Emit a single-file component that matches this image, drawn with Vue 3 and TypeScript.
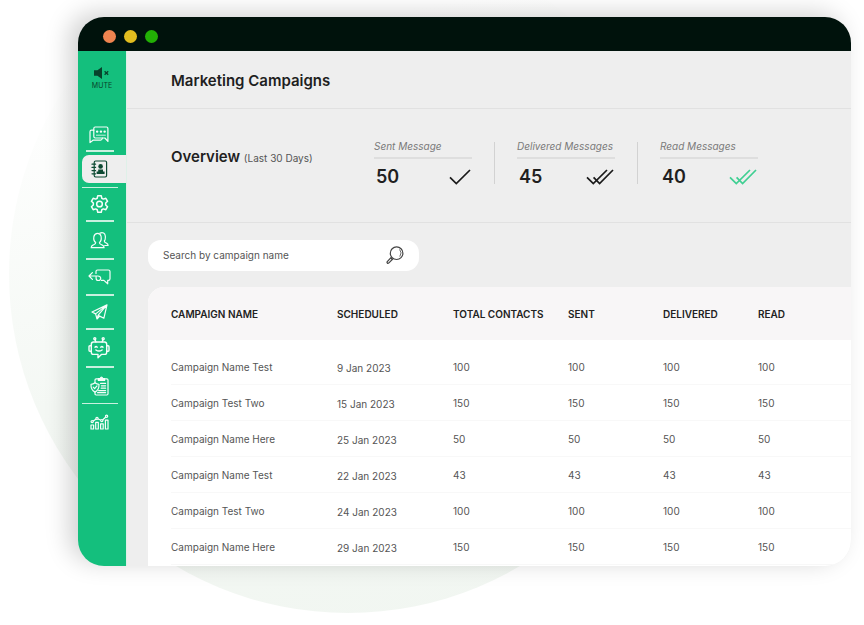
<script setup lang="ts">
import { ref } from 'vue'

interface NavItem {
  id: string
  label: string
  size?: 'compact' | 'short' | 'tall'
  wide?: boolean
}

interface Campaign {
  name: string
  scheduled: string
  count: number
}

interface Stat {
  label: string
  value: number
  icon: 'single' | 'double'
  read?: boolean
}

const navItems: NavItem[] = [
  { id: 'chat', label: 'Chats', size: 'compact' },
  { id: 'contacts', label: 'Contacts', wide: true },
  { id: 'settings', label: 'Settings', size: 'short' },
  { id: 'team', label: 'Team', size: 'tall' },
  { id: 'replies', label: 'Replies' },
  { id: 'campaigns', label: 'Campaigns', size: 'short' },
  { id: 'bot', label: 'Chatbot', size: 'tall' },
  { id: 'policies', label: 'Policies', wide: true },
  { id: 'analytics', label: 'Analytics' },
]

const stats: Stat[] = [
  { label: 'Sent Message', value: 50, icon: 'single' },
  { label: 'Delivered Messages', value: 45, icon: 'double' },
  { label: 'Read Messages', value: 40, icon: 'double', read: true },
]

const campaigns: Campaign[] = [
  { name: 'Campaign Name Test', scheduled: '9 Jan 2023', count: 100 },
  { name: 'Campaign Test Two', scheduled: '15 Jan 2023', count: 150 },
  { name: 'Campaign Name Here', scheduled: '25 Jan 2023', count: 50 },
  { name: 'Campaign Name Test', scheduled: '22 Jan 2023', count: 43 },
  { name: 'Campaign Test Two', scheduled: '24 Jan 2023', count: 100 },
  { name: 'Campaign Name Here', scheduled: '29 Jan 2023', count: 150 },
]

const active = ref('contacts')
const query = ref('')
</script>

<template>
  <div class="page">
    <div class="backdrop" aria-hidden="true"></div>
    <div class="window">
      <div class="titlebar">
        <span class="dot orange"></span>
        <span class="dot yellow"></span>
        <span class="dot green"></span>
      </div>
      <div class="body">
        <nav class="sidebar">
          <button class="mute" type="button">
            <svg width="16" height="12" viewBox="0 0 16 12" aria-hidden="true">
              <path d="M0 3.2h3.4L8 0v12L3.4 8.8H0z" fill="currentColor" />
              <path d="M10.6 4.2l3.6 3.6M14.2 4.2l-3.6 3.6" stroke="currentColor" stroke-width="1.3" />
            </svg>
            <span>MUTE</span>
          </button>
          <ul class="nav">
            <li v-for="item in navItems" :key="item.id" :class="[item.size, { wide: item.wide }]">
              <button
                type="button"
                :aria-label="item.label"
                :class="{ active: active === item.id }"
                @click="active = item.id"
              >
                <svg v-if="item.id === 'chat'" width="20" height="18" viewBox="0 0 20 18">
                  <path d="M6.2 1h11.3q1.4 0 1.4 1.4v13L15.9 12H6.2q-1.4 0-1.4-1.4V2.4Q4.8 1 6.2 1z" />
                  <path d="M4.8 4.2H2.6Q1 4.2 1 5.8V16.6l3-2.4h7.6q1.4 0 1.8-2" />
                  <path d="M8.1 5.6h.1M11.9 5.6h.1M15.6 5.6h.1" stroke-width="2.4" />
                  <path d="M7.4 9.2h9" stroke-width="0.8" />
                </svg>
                <svg v-else-if="item.id === 'contacts'" width="17" height="18" viewBox="0 0 17 18">
                  <rect x="3.2" y="1" width="12.4" height="16" rx="1.4" />
                  <path d="M1 4.2h3.6M1 7.4h3.6M1 10.6h3.6M1 13.8h3.6" />
                  <circle cx="9.6" cy="6.4" r="2.3" fill="currentColor" stroke="none" />
                  <path d="M7.2 9.4h4.8v2.2h1.6v2.3H5.6v-2.3h1.6z" fill="currentColor" stroke="none" />
                </svg>
                <svg v-else-if="item.id === 'settings'" width="19" height="20" viewBox="0 0 24 24" class="heavy">
                  <circle cx="12" cy="12" r="3.6" />
                  <path d="M9.8 1.5h4.4l.7 3.2 2 1.1 3.1-1 2.2 3.8-2.4 2.2v2.4l2.4 2.2-2.2 3.8-3.1-1-2 1.1-.7 3.2H9.8l-.7-3.2-2-1.1-3.1 1-2.2-3.8 2.4-2.2v-2.4L1.8 8.6 4 4.8l3.1 1 2-1.1z" />
                </svg>
                <svg v-else-if="item.id === 'team'" width="19" height="17" viewBox="0 0 19 17">
                  <path d="M5.7 10.6C3.8 9.2 3.6 6.2 3.9 4.5 4.4 2.4 5.8 1.4 7.6 1.4s3.1 1 3.5 3.1c.3 1.8.1 4.6-1.7 6.1-.2 1.5 1 1.7 3 2.5 1.4.6 1.7 1.4 1.7 2.6H1.2c0-1.3.3-2 1.7-2.6 1.8-.8 3-1 2.8-2.5z" />
                  <path d="M10 1.1C12.8-.1 15 1.2 15.3 4c.2 2 .2 3.7-1 5 0 1.3.8 1.5 2.2 2.1 1.2.5 1.6 1.1 1.6 2.4h-3.4" />
                </svg>
                <svg v-else-if="item.id === 'replies'" width="23" height="16" viewBox="0 0 23 16">
                  <path d="M8 4.5V2.6Q8 1 9.6 1H20.4Q22 1 22 2.6v7.2q0 1.6-1.6 1.6h-.7v3.4l-3.8-3.4h-2.5" />
                  <path d="M4.4 3.6L1 7l3.4 3.4M1 7h8.7c2.1 0 3 1 3 2.3s-1.1 2.2-2.3 2.2-2.3-1-2.3-2.3V7" />
                </svg>
                <svg v-else-if="item.id === 'campaigns'" width="17" height="16" viewBox="0 0 17 16">
                  <path d="M16 .9L1 8l3.6 1.9L6 15l2.7-2.9 4.2 2.1zM4.6 9.9L16 .9 7.2 11.2 6 15M7.2 11.2l1.5.9" />
                </svg>
                <svg v-else-if="item.id === 'bot'" width="22" height="22" viewBox="0 0 22 22" class="heavy-sm">
                  <path d="M5.5 5h11q2.2 0 2.2 2.2v8q0 2.2-2.2 2.2h-3.1L10 20.7v-3.3H5.5q-2.2 0-2.2-2.2v-8Q3.3 5 5.5 5z" />
                  <path d="M3.3 8.7H1.9Q1 8.7 1 9.7v3.5q0 1 .9 1h1.4M18.7 8.7h1.4q.9 0 .9 1v3.5q0 1-.9 1h-1.4" />
                  <path d="M7.9 5L7 2.6M14.1 5l.9-2.4M7 10.2q1.1-1.4 2.2 0M12.8 10.2q1.1-1.4 2.2 0M7.9 13q3.1 2.1 6.2 0" />
                  <circle cx="6.8" cy="1.8" r="1" />
                  <circle cx="15.2" cy="1.8" r="1" />
                </svg>
                <svg v-else-if="item.id === 'policies'" width="19" height="20" viewBox="0 0 19 20">
                  <path d="M5 7V4q0-1.2 1.2-1.2h10.6Q18 2.8 18 4v13.8q0 1.2-1.2 1.2H6.2Q5 19 5 17.8v-2" />
                  <path d="M8.4 4.4V2.6h1.8q1.3-3.2 2.6 0h1.8v1.8z" fill="currentColor" />
                  <path d="M10.6 7.4h5M11.4 9.8h4.2M11.2 12.2h4.4M8.6 14.6h7M7.6 16.7h8" />
                  <path d="M5 6.8q1.8 1.5 4 1.5c.2 3.6-1 6.3-4 7.8-3-1.5-4.2-4.2-4-7.8q2.2 0 4-1.5zM3.2 11.2l1.4 1.5 2.4-2.8" />
                </svg>
                <svg v-else width="19" height="16" viewBox="0 0 19 16">
                  <path d="M1 11h2.6v4H1zM5.7 8.4h2.6V15H5.7zM10.6 9.8h2.6V15h-2.6zM15.4 6.2H18V15h-2.6z" />
                  <path d="M3.2 7l2.7-1.8M8.1 5l2.4 1M12.8 5.8l2.7-2.6" />
                  <circle cx="2.2" cy="7.6" r="1.1" />
                  <circle cx="7" cy="4.4" r="1.1" />
                  <circle cx="11.8" cy="6.6" r="1.1" />
                  <circle cx="16.6" cy="2.2" r="1.1" />
                </svg>
              </button>
            </li>
          </ul>
        </nav>

        <main class="content">
          <header class="heading">
            <h1>Marketing Campaigns</h1>
          </header>

          <section class="overview">
            <h2>Overview <small>(Last 30 Days)</small></h2>
            <div class="stats">
              <div v-for="stat in stats" :key="stat.label" class="stat">
                <div class="stat-label">{{ stat.label }}</div>
                <div class="stat-row">
                  <strong>{{ stat.value }}</strong>
                  <svg v-if="stat.icon === 'single'" width="22" height="16" viewBox="0 0 22 16">
                    <path d="M1 8.3L7.3 14.6 21 1" />
                  </svg>
                  <svg v-else width="28" height="16" viewBox="0 0 28 16" :class="{ read: stat.read }">
                    <path d="M1 8.3L7.3 14.6 21 1M7.6 8.3L13.6 14.6 27 1" />
                  </svg>
                </div>
              </div>
            </div>
          </section>

          <form class="search" role="search" @submit.prevent>
            <input v-model="query" type="text" placeholder="Search by campaign name" aria-label="Search by campaign name" />
            <button type="submit" aria-label="Search">
              <svg width="18" height="18" viewBox="0 0 18 18">
                <circle cx="10.6" cy="7.2" r="6.3" />
                <path d="M13.6 3.4q2.8 3.2.2 7.2" stroke-width="0.8" />
                <path d="M6.2 11.8L5 13M5 11.6l1.6 1.6-3.9 3.9q-.8.5-1.4-.1t0-1.4z" />
              </svg>
            </button>
          </form>

          <div class="card">
            <table>
              <colgroup>
                <col class="c-name" />
                <col class="c-date" />
                <col class="c-total" />
                <col class="c-num" />
                <col class="c-num" />
                <col />
              </colgroup>
              <thead>
                <tr>
                  <th scope="col">CAMPAIGN NAME</th>
                  <th scope="col">SCHEDULED</th>
                  <th scope="col">TOTAL CONTACTS</th>
                  <th scope="col">SENT</th>
                  <th scope="col">DELIVERED</th>
                  <th scope="col">READ</th>
                </tr>
              </thead>
              <tbody>
                <tr v-for="(row, i) in campaigns" :key="i">
                  <td>{{ row.name }}</td>
                  <td class="date">{{ row.scheduled }}</td>
                  <td>{{ row.count }}</td>
                  <td>{{ row.count }}</td>
                  <td>{{ row.count }}</td>
                  <td>{{ row.count }}</td>
                </tr>
              </tbody>
            </table>
          </div>
        </main>
      </div>
    </div>
  </div>
</template>

<style>
body {
  background: #fff;
}
</style>

<style scoped>
.page {
  position: relative;
  box-sizing: border-box;
  min-height: 100vh;
  padding: 17px 13px 59px 78px;
  overflow: hidden;
  font-family: Inter, "Liberation Sans", sans-serif;
  color: #1f1f1f;
}

.backdrop {
  position: absolute;
  left: 9px;
  top: -65px;
  width: 678px;
  height: 678px;
  border-radius: 50%;
  background: linear-gradient(170deg, #fff 18%, #f4f8f4 60%, #f1f6f1 100%);
}

.window {
  position: relative;
  display: flex;
  flex-direction: column;
  border-radius: 26px;
  overflow: hidden;
  background: #eee;
  box-shadow: -9px -4px 24px rgba(0, 0, 0, 0.18);
}

.titlebar {
  display: flex;
  align-items: center;
  gap: 8px;
  height: 34px;
  padding: 4px 0 0 25px;
  box-sizing: border-box;
  background: #00120c;
}

.dot {
  width: 13px;
  height: 13px;
  border-radius: 50%;
}

.orange { background: #ef8450; }
.yellow { background: #e2bd1f; }
.green { background: #22b005; }

.body {
  display: flex;
}

button {
  border: 0;
  padding: 0;
  background: none;
  font: inherit;
  color: inherit;
  cursor: pointer;
}

.sidebar {
  flex: none;
  width: 48px;
  background: #14bf7d;
  border-right: 1px solid #dff0e8;
}

.mute {
  display: flex;
  flex-direction: column;
  align-items: center;
  gap: 3px;
  width: 100%;
  height: 69px;
  padding-top: 16px;
  color: #08432c;
  font-size: 7px;
  line-height: 8px;
}

.nav {
  margin: 0;
  padding: 0;
  list-style: none;
}

.nav li {
  display: flex;
  flex-direction: column;
  align-items: flex-end;
  height: 36px;
}

.nav li.compact { height: 32px; }
.nav li.short { height: 34px; }
.nav li.tall { height: 38px; }

.nav li::after {
  content: "";
  width: 28px;
  height: 2px;
  margin-right: 12px;
  background: #c9f0df;
}

.nav li.wide::after {
  width: 36px;
  height: 1px;
  margin-right: 8px;
}

.nav li:last-child::after {
  display: none;
}

.nav button {
  flex: 1;
  display: flex;
  align-items: center;
  justify-content: center;
  width: 44px;
  padding-right: 10px;
  color: #f6fdfa;
}

.nav button.active {
  margin: 3px 0 4px;
  border-radius: 7px 0 0 7px;
  background: #eee;
  color: #0d4a33;
}

.nav svg {
  flex: none;
  fill: none;
  stroke: currentColor;
  stroke-width: 1.2;
  stroke-linejoin: round;
  stroke-linecap: round;
}

.nav svg.heavy { stroke-width: 1.9; }
.nav svg.heavy-sm { stroke-width: 1.4; }

.content {
  flex: 1;
  min-width: 0;
}

.heading {
  display: flex;
  align-items: center;
  height: 57px;
  padding: 2px 44px 0;
  box-sizing: border-box;
}

h1 {
  margin: 0;
  font-size: 15px;
  line-height: 20px;
  font-weight: 600;
}

.overview {
  display: grid;
  grid-template-columns: 203px 1fr;
  height: 115px;
  padding: 33px 0 0 44px;
  box-sizing: border-box;
  border-top: 1px solid #e1e1e1;
  border-bottom: 1px solid #e1e1e1;
}

h2 {
  margin: 0;
  padding-top: 5px;
  font-size: 15px;
  line-height: 20px;
  font-weight: 600;
}

h2 small {
  font-size: 10px;
  font-weight: 400;
  color: #555;
}

.stats {
  display: flex;
}

.stat {
  width: 98px;
  height: 42px;
  padding: 0 22px;
  border-left: 1px solid #d2d2d2;
}

.stat:first-child {
  padding-left: 0;
  border-left: 0;
}

.stat-label {
  height: 15px;
  border-bottom: 2px solid #dedede;
  font-size: 10px;
  line-height: 8px;
  font-style: italic;
  color: #7a7a7a;
  white-space: nowrap;
}

.stat-row {
  display: flex;
  align-items: center;
  justify-content: space-between;
  padding: 7px 1px 0 2px;
}

.stat-row strong {
  font-size: 18px;
  line-height: 22px;
  font-weight: 600;
}

.stat-row svg {
  fill: none;
  stroke: #1a1a1a;
  stroke-width: 1.7;
}

.stat-row svg.read {
  stroke: #3fcf92;
}

.search {
  display: flex;
  align-items: center;
  width: 271px;
  height: 31px;
  margin: 17px 0 16px 21px;
  padding: 0 15px 2px;
  box-sizing: border-box;
  border-radius: 13px;
  background: #fff;
}

.search input {
  flex: 1;
  min-width: 0;
  border: 0;
  padding: 0;
  outline: none;
  background: none;
  font: 10px/14px Inter, "Liberation Sans", sans-serif;
  color: #444;
}

.search input::placeholder {
  color: #555;
  opacity: 1;
}

.search button {
  display: flex;
}

.search svg {
  fill: none;
  stroke: #444;
  stroke-width: 1.2;
}

.card {
  margin-left: 21px;
  padding-bottom: 1px;
  border-radius: 16px 0 0 0;
  overflow: hidden;
  background: #fff;
}

table {
  width: 100%;
  table-layout: fixed;
  border-collapse: collapse;
}

.c-name { width: 189px; }
.c-date { width: 116px; }
.c-total { width: 115px; }
.c-num { width: 95px; }

th,
td {
  padding: 0;
  text-align: left;
  white-space: nowrap;
}

th {
  height: 53px;
  box-sizing: border-box;
  background: #f8f6f7;
  font-size: 10px;
  font-weight: 600;
  color: #222;
}

td {
  height: 36px;
  box-sizing: border-box;
  background: linear-gradient(#f8f8f8, #f8f8f8) right bottom / 100% 1px no-repeat;
  font-size: 10px;
  line-height: 14px;
  color: #555;
}

th:first-child,
td:first-child {
  padding-left: 23px;
}

td:first-child {
  background-size: calc(100% - 23px) 1px;
}

tbody tr:first-child td {
  height: 45px;
  padding-top: 9px;
}

td.date {
  padding-top: 2px;
}

tbody tr:first-child td.date {
  padding-top: 11px;
}
</style>
